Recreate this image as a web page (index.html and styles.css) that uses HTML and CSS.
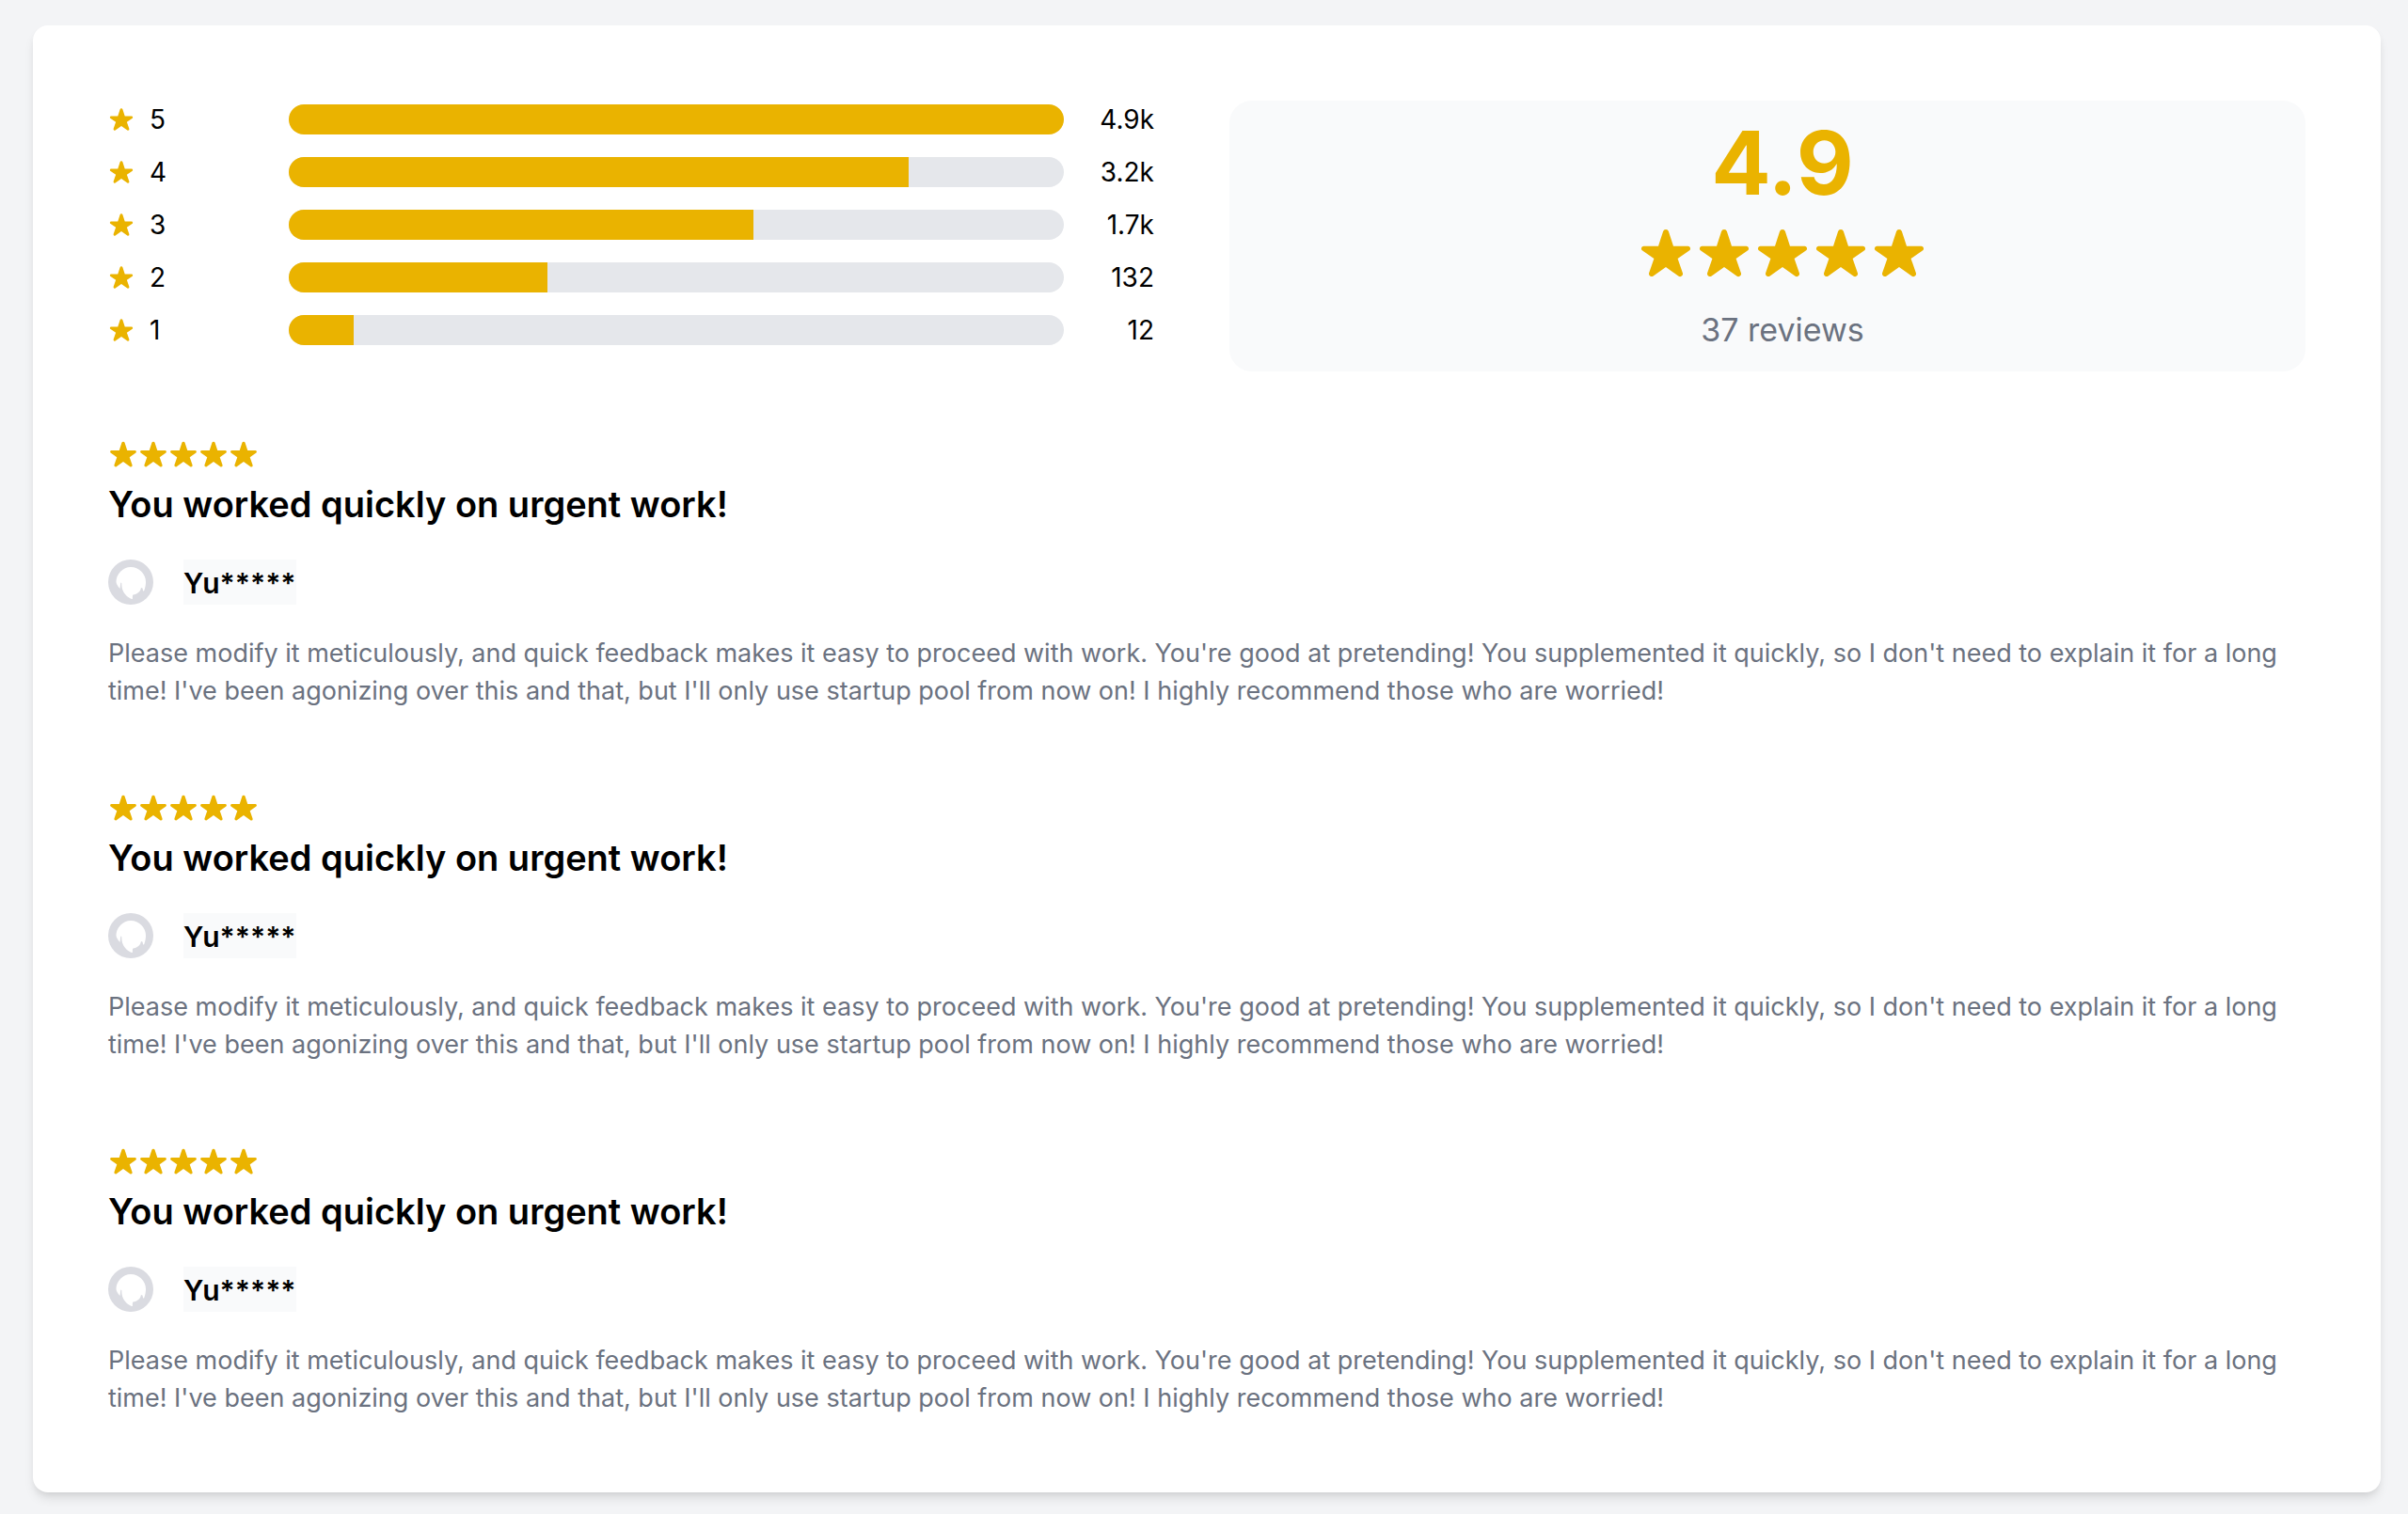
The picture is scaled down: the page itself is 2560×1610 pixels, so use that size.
FILE: index.html
```html
<!DOCTYPE html>
<html lang="en">
<head>
<meta charset="utf-8">
<meta name="viewport" content="width=device-width, initial-scale=1">
<title>Reviews</title>
<link rel="stylesheet" href="styles.css">
</head>
<body>
<svg class="sprite" aria-hidden="true">
  <symbol id="star" viewBox="-18 -22 548 548"><path d="M394 482a27 27 0 01-13-4L256 390 131 478a27 27 0 01-39-29L141 306 26 228a25 25 0 0114-43h143l46-141a28 28 0 0154 0l46 141h143a25 25 0 0114 43L371 306l49 143A27 27 0 01394 482z"/></symbol>
  <symbol id="avatar" viewBox="0 0 48 48"><circle cx="24" cy="24" r="24" fill="#dadbe1"/><path fill="#fff" d="M24 8a16 16 0 0 1 16 16c0 3-.6 6-1.700 9-.8.8-1 .7-1.300 0l-.5-2.500-1.500-.5c-.7 3.500-2.200 5-5 6.500-1.500.7-3.500.8-4 1.500l-.200 4c-2 0-6-2.500-8.500-6-1.700-2.500-3-5.500-3-11l-1-.500-.8 6.500C10 28 8.500 26 8.500 23.500A16 16 0 0 1 24 8z"/></symbol>
</svg>
<main class="card">
  <section class="summary">
    <div class="bars">
      <div class="bar-row"><span class="label"><svg><use href="#star"/></svg>5</span><span class="track"><span class="fill" style="width:100%"></span></span><span class="count">4.9k</span></div>
      <div class="bar-row"><span class="label"><svg><use href="#star"/></svg>4</span><span class="track"><span class="fill" style="width:80%"></span></span><span class="count">3.2k</span></div>
      <div class="bar-row"><span class="label"><svg><use href="#star"/></svg>3</span><span class="track"><span class="fill" style="width:60%"></span></span><span class="count">1.7k</span></div>
      <div class="bar-row"><span class="label"><svg><use href="#star"/></svg>2</span><span class="track"><span class="fill" style="width:33.333%"></span></span><span class="count">132</span></div>
      <div class="bar-row"><span class="label"><svg><use href="#star"/></svg>1</span><span class="track"><span class="fill" style="width:8.333%"></span></span><span class="count">12</span></div>
    </div>
    <div class="score">
      <p class="score-value">4.9</p>
      <div class="score-stars"><svg><use href="#star"/></svg><svg><use href="#star"/></svg><svg><use href="#star"/></svg><svg><use href="#star"/></svg><svg><use href="#star"/></svg></div>
      <p class="score-total">37 reviews</p>
    </div>
  </section>
  <section class="reviews">
    <article>
      <div class="stars"><svg><use href="#star"/></svg><svg><use href="#star"/></svg><svg><use href="#star"/></svg><svg><use href="#star"/></svg><svg><use href="#star"/></svg></div>
      <h2>You worked quickly on urgent work!</h2>
      <div class="author"><svg><use href="#avatar"/></svg><span class="name">Yu*****</span></div>
      <p class="text">Please modify it meticulously, and quick feedback makes it easy to proceed with work. You're good at pretending! You supplemented it quickly, so I don't need to explain it for a long time! I've been agonizing over this and that, but I'll only use startup pool from now on! I highly recommend those who are worried!</p>
    </article>
    <article>
      <div class="stars"><svg><use href="#star"/></svg><svg><use href="#star"/></svg><svg><use href="#star"/></svg><svg><use href="#star"/></svg><svg><use href="#star"/></svg></div>
      <h2>You worked quickly on urgent work!</h2>
      <div class="author"><svg><use href="#avatar"/></svg><span class="name">Yu*****</span></div>
      <p class="text">Please modify it meticulously, and quick feedback makes it easy to proceed with work. You're good at pretending! You supplemented it quickly, so I don't need to explain it for a long time! I've been agonizing over this and that, but I'll only use startup pool from now on! I highly recommend those who are worried!</p>
    </article>
    <article>
      <div class="stars"><svg><use href="#star"/></svg><svg><use href="#star"/></svg><svg><use href="#star"/></svg><svg><use href="#star"/></svg><svg><use href="#star"/></svg></div>
      <h2>You worked quickly on urgent work!</h2>
      <div class="author"><svg><use href="#avatar"/></svg><span class="name">Yu*****</span></div>
      <p class="text">Please modify it meticulously, and quick feedback makes it easy to proceed with work. You're good at pretending! You supplemented it quickly, so I don't need to explain it for a long time! I've been agonizing over this and that, but I'll only use startup pool from now on! I highly recommend those who are worried!</p>
    </article>
  </section>
</main>
</body>
</html>
```
FILE: styles.css
```css
* { box-sizing: border-box; }
body {
  margin: 0;
  padding: 27px 29px 23px 35px;
  background: #f3f4f6;
  color: #000;
  font: 28px/40px Inter, "Liberation Sans", sans-serif;
}
h2, p { margin: 0; }
svg { display: block; flex: none; fill: #eab300; }
.sprite { position: absolute; width: 0; height: 0; }
.card {
  padding: 80px;
  background: #fff;
  border-radius: 16px;
  box-shadow: 0 8px 12px -2px rgba(0, 0, 0, .1), 0 4px 8px -4px rgba(0, 0, 0, .1);
}
.summary { display: grid; grid-template-columns: 1fr 1fr; gap: 48px; }
.bars { display: flex; flex-direction: column; gap: 16px; padding-right: 32px; }
.bar-row { display: grid; grid-template-columns: 192px 1fr 96px; align-items: center; }
.label { display: flex; align-items: center; gap: 16px; }
.label svg { width: 28px; height: 28px; }
.track { height: 32px; overflow: hidden; border-radius: 16px; background: #e5e7eb; }
.fill { display: block; height: 100%; background: #eab300; }
.count { text-align: right; }
.score {
  display: flex;
  flex-direction: column;
  align-items: center;
  min-height: 288px;
  padding: 16px 0 16px 32px;
  border-radius: 24px;
  background: #f9fafb;
}
.score-value { color: #eab300; font-size: 94px; line-height: 100px; font-weight: 700; }
.score-stars { display: flex; gap: 2px; margin: 16px 0 24px; }
.score-stars svg { width: 60px; height: 60px; }
.score-total { color: #6b7280; font-size: 34px; line-height: 56px; }
.reviews { display: grid; gap: 84px; margin-top: 68px; }
.stars { display: flex; align-items: center; height: 40px; }
.stars svg { width: 32px; height: 32px; }
h2 { font-size: 38px; line-height: 66px; font-weight: 600; }
.author { display: flex; gap: 32px; margin: 26px 0 32px; }
.author svg { width: 48px; height: 48px; }
.name { padding-top: 2px; background: #f9fafb; font-size: 30px; line-height: 46px; font-weight: 600; }
.text { color: #6b7280; font-size: 27px; }
```
